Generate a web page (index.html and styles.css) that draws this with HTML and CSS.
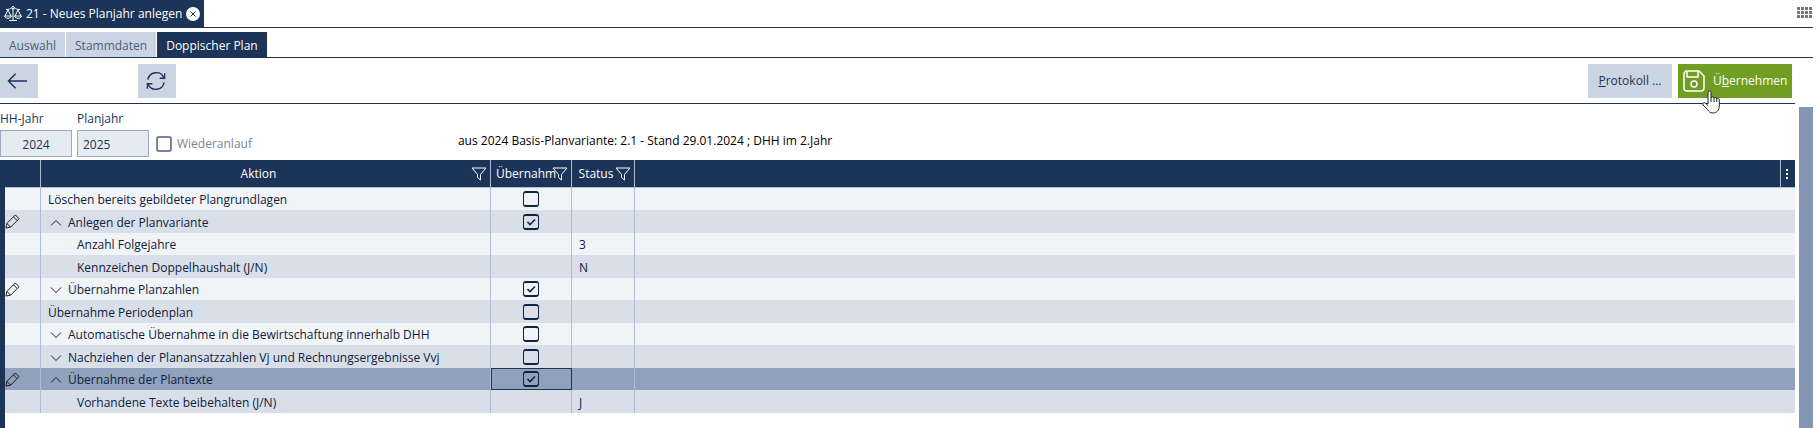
FILE: index.html
```
<!DOCTYPE html>
<html lang="de">
<head>
    <meta charset="UTF-8">
    <title>Neues Planjahr anlegen</title>
    <link rel="stylesheet" href="styles.css">
</head>
<body>
    <svg class="symbols" aria-hidden="true">
        <symbol id="filter" viewBox="0 0 16 14"><path d="M1 1h14L9.500 7.500V13l-3-2.500v-3z"/></symbol>
        <symbol id="pencil" viewBox="0 0 16 16"><path d="M1 15l1-5L11 1l4 4-9 9zM9 3l4 4M2 10l4 4"/></symbol>
        <symbol id="up" viewBox="0 0 12 8"><path d="M1 6.500l5-5 5 5"/></symbol>
        <symbol id="down" viewBox="0 0 12 8"><path d="M1 1.500l5 5 5-5"/></symbol>
    </svg>

    <header class="window-bar">
        <div class="window-tab">
            <svg class="scales" viewBox="0 0 18 16"><path d="M9 2v12M5 14.500h8M2 3.500c3 0 4-.5 5.500-1.500M16 3.500c-3 0-4-.5-5.500-1.500M4 4L1 10M4 4l3 6M14 4l-3 6M14 4l3 6M.5 10h7c-.5 3-6.500 3-7 0zM10.500 10h7c-.5 3-6.500 3-7 0z"/><circle cx="9" cy="1.800" r="1.300"/></svg>
            <span>21 - Neues Planjahr anlegen</span>
            <button class="close" aria-label="Schließen"><svg viewBox="0 0 14 14"><circle cx="7" cy="7" r="7"/><path d="M4.500 4.500l5 5M9.500 4.500l-5 5"/></svg></button>
        </div>
        <button class="apps" aria-label="Menü"><svg viewBox="0 0 15 11"><path d="M0 1.500h15M0 5.500h15M0 9.500h15"/></svg></button>
    </header>

    <nav class="tabs">
        <button>Auswahl</button>
        <button>Stammdaten</button>
        <button class="active">Doppischer Plan</button>
    </nav>

    <div class="page">
        <main class="content">
            <div class="toolbar">
                <button class="icon-button" aria-label="Zurück"><svg class="back" viewBox="0 0 22 18"><path d="M21 9H2M9 1.500L1.500 9 9 16.500"/></svg></button>
                <button class="icon-button refresh" aria-label="Aktualisieren"><svg class="reload" viewBox="0 0 22 22"><path d="M2 9.500C4 .5 15.500-1 19.500 7M20 12.500C18 21.500 6.500 23 2.500 15M20.500 2.500V8h-5.500M1.500 19.500V14H7"/></svg></button>
                <button class="protocol"><span><u>P</u>rotokoll ...</span></button>
                <button class="apply">
                    <svg class="disk" viewBox="0 0 22 22"><path d="M4 1h12l5 5v12a3 3 0 0 1-3 3H4a3 3 0 0 1-3-3V4a3 3 0 0 1 3-3zM4 1v6h11V1"/><circle cx="11" cy="14" r="3"/></svg>
                    <span>Ü<u>b</u>ernehmen</span>
                    <svg class="cursor" viewBox="0 0 18 24"><path d="M6 14V2.500a1.500 1.500 0 0 1 3 0V8c0-1.500 3-1.500 3 .5 0-1.500 2.700-1.500 2.700.5 0-1.300 2.600-1.300 2.600.8V16c0 4-2.500 7-6.300 7-3 0-4-1.500-5.500-3.500L1 15c-1-2 1-3 2.500-1.800L6 15.500"/><path d="M9 8v4M12 8.500V12M14.700 9v3"/></svg>
                </button>
            </div>

            <form class="filters">
                <label class="field year">HH-Jahr<input type="text" value="2024"></label>
                <label class="field">Planjahr<input type="text" value="2025"></label>
                <label class="rerun"><input type="checkbox">Wiederanlauf</label>
                <output class="info">aus 2024 Basis-Planvariante: 2.1 - Stand 29.01.2024 ; DHH im 2.Jahr</output>
            </form>

            <div class="grid">
                <table>
                    <colgroup>
                        <col class="col-edit"><col class="col-action"><col class="col-take"><col class="col-status"><col><col class="col-menu">
                    </colgroup>
                    <thead>
                        <tr>
                            <th></th>
                            <th><div class="head"><span>Aktion</span><svg><use href="#filter"/></svg></div></th>
                            <th><div class="head"><span>Übernahm</span><svg><use href="#filter"/></svg></div></th>
                            <th><div class="head"><span>Status</span><svg><use href="#filter"/></svg></div></th>
                            <th></th>
                            <th><button class="more" aria-label="Spalten"><svg viewBox="0 0 2 10"><path d="M0 0h2v2H0zM0 4h2v2H0zM0 8h2v2H0z"/></svg></button></th>
                        </tr>
                    </thead>
                    <tbody>
                        <tr>
                            <td></td>
                            <td>Löschen bereits gebildeter Plangrundlagen</td>
                            <td><input type="checkbox" aria-label="Löschen bereits gebildeter Plangrundlagen"></td>
                            <td></td><td colspan="2"></td>
                        </tr>
                        <tr class="dark">
                            <td><svg class="pencil"><use href="#pencil"/></svg></td>
                            <td><button class="toggle"><svg><use href="#up"/></svg>Anlegen der Planvariante</button></td>
                            <td><input type="checkbox" aria-label="Anlegen der Planvariante" checked></td>
                            <td></td><td colspan="2"></td>
                        </tr>
                        <tr>
                            <td></td>
                            <td class="child">Anzahl Folgejahre</td>
                            <td></td>
                            <td>3</td><td colspan="2"></td>
                        </tr>
                        <tr class="dark">
                            <td></td>
                            <td class="child">Kennzeichen Doppelhaushalt (J/N)</td>
                            <td></td>
                            <td>N</td><td colspan="2"></td>
                        </tr>
                        <tr>
                            <td><svg class="pencil"><use href="#pencil"/></svg></td>
                            <td><button class="toggle"><svg><use href="#down"/></svg>Übernahme Planzahlen</button></td>
                            <td><input type="checkbox" aria-label="Übernahme Planzahlen" checked></td>
                            <td></td><td colspan="2"></td>
                        </tr>
                        <tr class="dark">
                            <td></td>
                            <td>Übernahme Periodenplan</td>
                            <td><input type="checkbox" aria-label="Übernahme Periodenplan"></td>
                            <td></td><td colspan="2"></td>
                        </tr>
                        <tr>
                            <td></td>
                            <td><button class="toggle"><svg><use href="#down"/></svg>Automatische Übernahme in die Bewirtschaftung innerhalb DHH</button></td>
                            <td><input type="checkbox" aria-label="Automatische Übernahme in die Bewirtschaftung"></td>
                            <td></td><td colspan="2"></td>
                        </tr>
                        <tr class="dark">
                            <td></td>
                            <td><button class="toggle"><svg><use href="#down"/></svg>Nachziehen der Planansatzzahlen Vj und Rechnungsergebnisse Vvj</button></td>
                            <td><input type="checkbox" aria-label="Nachziehen der Planansatzzahlen"></td>
                            <td></td><td colspan="2"></td>
                        </tr>
                        <tr class="selected">
                            <td><svg class="pencil"><use href="#pencil"/></svg></td>
                            <td><button class="toggle"><svg><use href="#up"/></svg>Übernahme der Plantexte</button></td>
                            <td class="focus"><input type="checkbox" aria-label="Übernahme der Plantexte" checked></td>
                            <td></td><td colspan="2"></td>
                        </tr>
                        <tr class="dark">
                            <td></td>
                            <td class="child">Vorhandene Texte beibehalten (J/N)</td>
                            <td></td>
                            <td>J</td><td colspan="2"></td>
                        </tr>
                    </tbody>
                </table>
            </div>
        </main>
        <div class="scrollbar"></div>
    </div>
</body>
</html>
```
FILE: styles.css
```
* {
    box-sizing: border-box;
}
body {
    margin: 0;
    padding-right: 6px;
    height: 100vh;
    display: flex;
    flex-direction: column;
    overflow: hidden;
    background: #fff;
    color: #1b3458;
    font: 12px/18px "Open Sans", "Noto Sans", sans-serif;
}
button, input {
    font: inherit;
    color: inherit;
}
button {
    border: 0;
    padding: 0;
    background: none;
}
svg {
    display: block;
    flex: none;
    fill: none;
    stroke: currentColor;
}
.symbols {
    position: absolute;
    width: 0;
    height: 0;
}

/* window tab */
.window-bar {
    display: flex;
    justify-content: space-between;
    height: 28px;
    border-bottom: 1px solid #1b3458;
}
.window-tab {
    display: flex;
    align-items: center;
    gap: 4px;
    padding: 0 4px;
    background: #1b3458;
    color: #fff;
}
.scales {
    width: 18px;
    height: 16px;
}
.close svg {
    width: 14px;
    height: 14px;
    fill: #fff;
    stroke: none;
}
.close path {
    stroke: #1b3458;
}
.apps {
    padding: 0 1px 2px 0;
}
.apps svg {
    width: 15px;
    height: 11px;
    stroke: #777;
    stroke-width: 3;
    stroke-dasharray: 3 1;
}

/* tabs */
.tabs {
    display: flex;
    gap: 1px;
    height: 30px;
    padding-top: 4px;
    border-bottom: 1px solid #1b3458;
}
.tabs button {
    padding: 3px 9px 0;
    background: #cbd5e1;
    color: #4a5f80;
}
.tabs .active {
    background: #1b3458;
    color: #fff;
}

/* toolbar */
.page {
    flex: 1;
    display: flex;
    gap: 4px;
    min-height: 0;
}
.content {
    flex: 1;
    display: flex;
    flex-direction: column;
    min-width: 0;
}
.scrollbar {
    width: 14px;
    margin-top: 49px;
    background: #8496b3;
}
.toolbar {
    display: flex;
    height: 46px;
    padding: 6px 3px 5px 0;
    border-bottom: 1px solid #1b3458;
}
.toolbar button {
    display: flex;
    align-items: center;
    background: #cbd5e1;
}
.toolbar .icon-button {
    width: 38px;
    padding-left: 7px;
}
.toolbar .refresh {
    margin-left: 100px;
    padding-left: 8px;
}
.back {
    width: 21px;
    height: 18px;
    stroke-width: 1.5;
}
.reload {
    width: 20px;
    height: 22px;
    stroke-width: 1.5;
}
.toolbar .protocol {
    justify-content: center;
    width: 84px;
    margin-left: auto;
}
.toolbar .apply {
    position: relative;
    gap: 8px;
    width: 114px;
    margin-left: 6px;
    padding-left: 5px;
    background: #6f9e23;
    color: #fff;
}
.disk {
    width: 22px;
    height: 22px;
    stroke-width: 1.5;
}
.cursor {
    position: absolute;
    left: 24px;
    top: 26px;
    width: 18px;
    height: 24px;
    fill: #fff;
    stroke: #222;
}

/* filter fields */
.filters {
    display: flex;
    gap: 5px;
    height: 56px;
    padding-top: 6px;
}
.field {
    width: 72px;
}
.field input {
    display: block;
    width: 100%;
    height: 27px;
    margin-top: 2px;
    padding: 2px 5px 0;
    border: 1px solid #9babc6;
    border-radius: 0;
    background: #e6ebf2;
}
.year input {
    text-align: center;
}
input[type="checkbox"] {
    appearance: none;
    display: block;
    flex: none;
    width: 16px;
    height: 16px;
    margin: 0;
    border: 1px solid #10233f;
    border-width: 2px 1px;
    border-radius: 3px;
}
input[type="checkbox"]:checked {
    background: url("data:image/svg+xml,%3Csvg xmlns='http://www.w3.org/2000/svg' viewBox='0 0 12 12'%3E%3Cpath d='M2.500 6l2.500 2.500 5-5' fill='none' stroke='%2310233f' stroke-width='1.600'/%3E%3C/svg%3E") center / 12px 12px no-repeat;
}
.rerun {
    display: flex;
    align-items: center;
    gap: 5px;
    height: 18px;
    margin: 25px 0 0 2px;
    color: #76859c;
}
.rerun input[type="checkbox"] {
    border: 2px solid #76859c;
}
.info {
    margin: 22px 0 0 201px;
    color: #000;
}

/* grid */
.grid {
    flex: 1;
    border-left: 5px solid #1b3458;
}
table {
    width: 100%;
    table-layout: fixed;
    border-spacing: 0;
    color: #10203c;
}
.col-edit {
    width: 36px;
}
.col-action {
    width: 450px;
}
.col-take {
    width: 81px;
}
.col-status {
    width: 63px;
}
.col-menu {
    width: 14px;
}
th, td {
    padding: 2px 0 0 7px;
    border-right: 1px solid #adbdd3;
    text-align: left;
    white-space: nowrap;
}
th:last-child, td:last-child {
    border-right: 0;
}
th {
    height: 28px;
    padding: 1px 3px 0 5px;
    border-bottom: 1px solid #adbdd3;
    background: #1b3458;
    color: #fff;
    font-weight: normal;
}
th:first-child {
    box-shadow: -5px 0 #1b3458;
}
.head {
    display: flex;
    align-items: center;
}
.head span {
    flex: 1;
    min-width: 0;
    text-align: center;
}
th:nth-child(3) span {
    text-align: left;
}
.head svg {
    width: 16px;
    height: 14px;
}
.more {
    display: block;
}
.more svg {
    width: 2px;
    height: 10px;
    fill: #fff;
    stroke: none;
}
td {
    height: 22px;
    background: #f0f4f7;
}
tr:nth-child(even) td {
    height: 23px;
}
.dark td {
    background: #d9dfe9;
}
.selected td {
    background: #90a1bb;
}
td:first-child {
    padding: 0;
}
td.child {
    padding-left: 36px;
}
td:nth-child(3) {
    padding: 0 0 0 32px;
}
td.focus {
    outline: 1px solid #1b3458;
    outline-offset: -1px;
}
.pencil {
    width: 15px;
    height: 15px;
    stroke: #111;
}
.toggle {
    display: flex;
    align-items: center;
    gap: 6px;
    padding-left: 2px;
}
.toggle svg {
    width: 12px;
    height: 8px;
    color: #10203c;
}
```
